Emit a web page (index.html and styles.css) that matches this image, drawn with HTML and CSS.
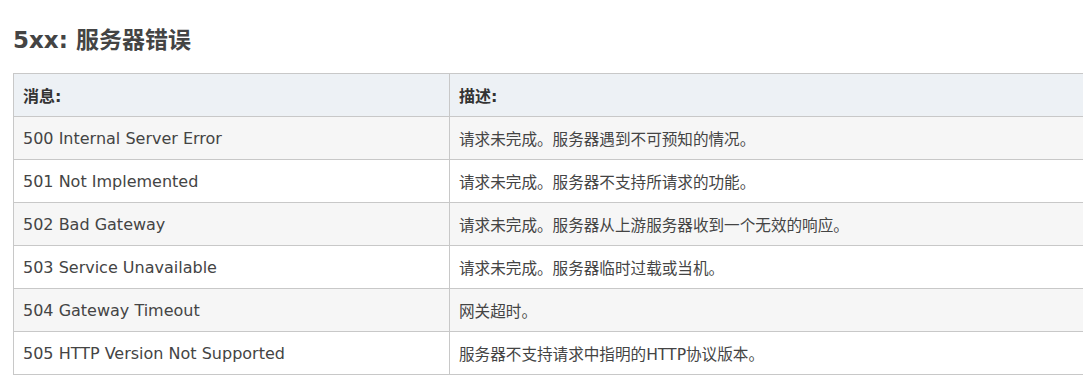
FILE: index.html
```html
<!DOCTYPE html>
<html lang="zh">
<head>
<meta charset="utf-8">
<link rel="stylesheet" href="styles.css">
</head>
<body>
<div class="page">
  <h2 class="title">5xx: 服务器错误</h2>
  <table class="codes">
    <thead>
      <tr><th class="c1">消息:</th><th>描述:</th></tr>
    </thead>
    <tbody>
      <tr><td>500 Internal Server Error</td><td class="desc">请求未完成。服务器遇到不可预知的情况。</td></tr>
      <tr><td>501 Not Implemented</td><td class="desc">请求未完成。服务器不支持所请求的功能。</td></tr>
      <tr><td>502 Bad Gateway</td><td class="desc">请求未完成。服务器从上游服务器收到一个无效的响应。</td></tr>
      <tr><td>503 Service Unavailable</td><td class="desc">请求未完成。服务器临时过载或当机。</td></tr>
      <tr><td>504 Gateway Timeout</td><td class="desc">网关超时。</td></tr>
      <tr><td>505 HTTP Version Not Supported</td><td class="desc">服务器不支持请求中指明的HTTP协议版本。</td></tr>
    </tbody>
  </table>
</div>
</body>
</html>
```
FILE: styles.css
```css
html, body {
  margin: 0;
  padding: 0;
  background: #fff;
  overflow: hidden;
}
body {
  font-family: "DejaVu Sans", "Noto Sans CJK SC", sans-serif;
  color: #333;
}
.page {
  padding: 0 0 0 13px;
  width: 1120px;
}
.title {
  margin: 0 0 18px 0;
  padding-top: 25px;
  font-size: 23px;
  line-height: 30px;
  font-weight: bold;
  color: #444;
}
.codes {
  width: 100%;
  border-collapse: collapse;
  font-size: 16px;
  color: #444;
}
.codes th, .codes td {
  border: 1px solid #c8c8c8;
  text-align: left;
  padding: 0 9px;
  height: 43px;
  box-sizing: border-box;
  vertical-align: middle;
}
.codes th {
  background: #edf1f5;
  font-weight: bold;
  color: #333;
}
.codes .c1 {
  width: 436px;
}
.codes .desc {
  font-size: 15.6px;
}
.codes tbody tr:nth-child(odd) td {
  background: #f6f6f6;
}
.codes tbody tr:nth-child(even) td {
  background: #fff;
}
```
